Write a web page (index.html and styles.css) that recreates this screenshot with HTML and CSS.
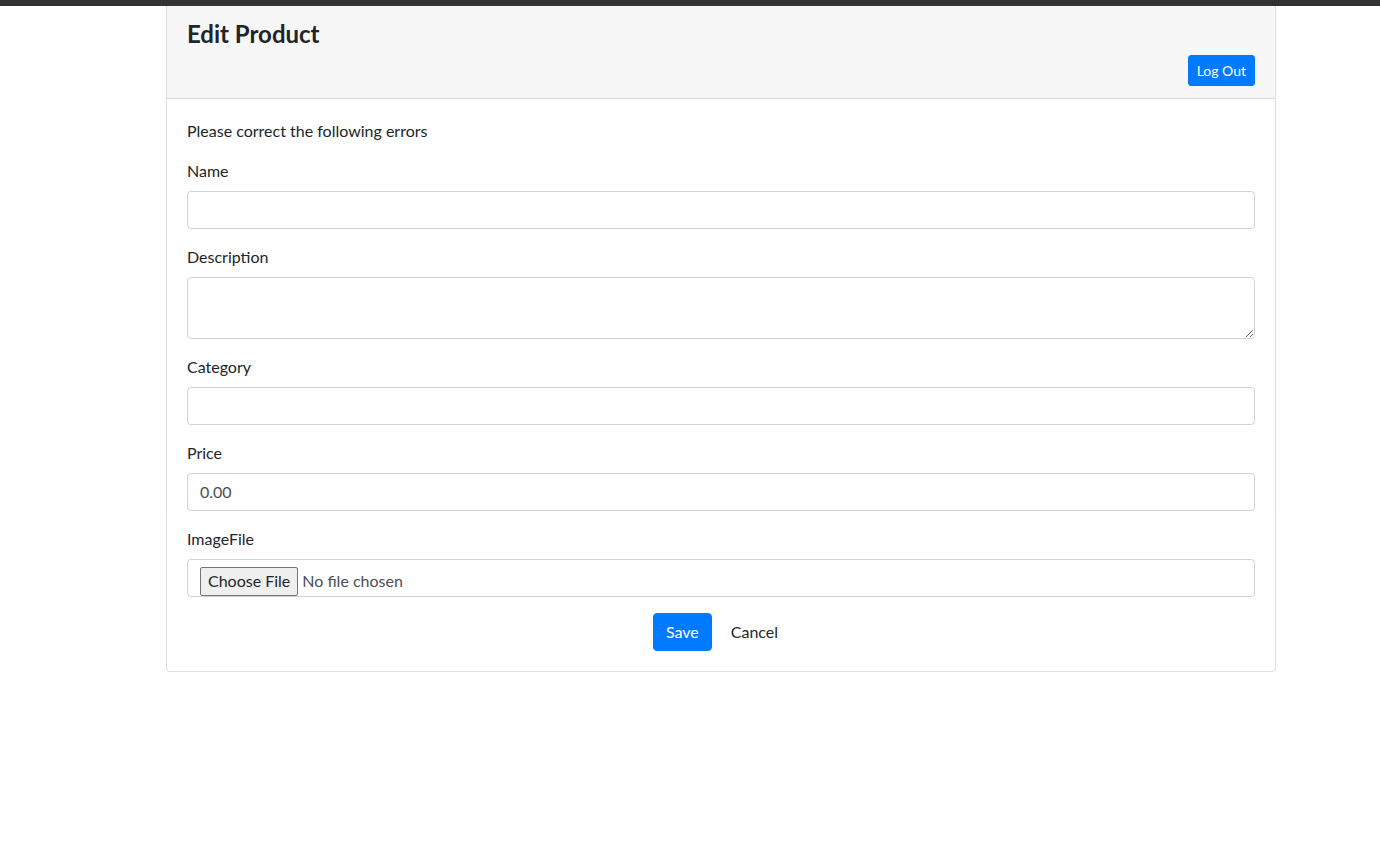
FILE: index.html
```html
<!DOCTYPE html>
<html lang="en">
<head>
<meta charset="utf-8">
<title>Edit Product</title>
<link rel="stylesheet" href="styles.css">
</head>
<body>
<div class="topbar"></div>
<div class="wrap">
  <div class="card">
    <div class="card-header">
      <h4 class="title">Edit Product</h4>
      <div class="header-actions">
        <button class="btn btn-primary btn-sm" type="button">Log Out</button>
      </div>
    </div>
    <div class="card-body">
      <p class="errors">Please correct the following errors</p>
      <div class="form-group">
        <label class="label">Name</label>
        <input class="form-control" type="text">
      </div>
      <div class="form-group">
        <label class="label">Description</label>
        <textarea class="form-control textarea" rows="2"></textarea>
      </div>
      <div class="form-group">
        <label class="label">Category</label>
        <input class="form-control" type="text">
      </div>
      <div class="form-group">
        <label class="label">Price</label>
        <input class="form-control" type="text" value="0.00">
      </div>
      <div class="form-group">
        <label class="label">ImageFile</label>
        <input class="form-control file" type="file">
      </div>
      <div class="actions">
        <button class="btn btn-primary" type="button">Save</button>
        <button class="btn btn-link" type="button">Cancel</button>
      </div>
    </div>
  </div>
</div>
</body>
</html>
```
FILE: styles.css
```css
* { box-sizing: border-box; }
html, body { margin: 0; padding: 0; }
body {
  font-family: "Lato", "Noto Sans", sans-serif;
  font-size: 16px;
  line-height: 1.5;
  color: #212529;
  background: #fff;
}
.topbar { height: 6px; background: #333333; }
.wrap { padding-left: 166px; width: 1276px; }
.card {
  border: 1px solid rgba(0,0,0,.125);
  border-top: none;
  border-radius: 0 0 4px 4px;
  background: #fff;
}
.card-header {
  background: #f7f7f7;
  border-bottom: 1px solid rgba(0,0,0,.125);
  padding: 14px 20px 12px;
}
.title {
  margin: 0 0 6px;
  font-size: 24px;
  font-weight: 700;
  line-height: 1.2;
}
.header-actions { display: flex; justify-content: flex-end; }
.card-body { padding: 20px; }
.errors { margin: 0 0 16px; }
.form-group { margin-bottom: 16px; }
.label { display: block; margin-bottom: 8px; }
.form-control {
  display: block;
  width: 100%;
  height: 38px;
  padding: 6px 12px;
  font-family: inherit;
  font-size: 16px;
  line-height: 1.5;
  color: #495057;
  background: #fff;
  border: 1px solid #ced4da;
  border-radius: 4px;
}
.textarea { height: 62px; resize: vertical; }
.file { padding: 7px 12px 0; font-size: 16px; line-height: 28px; }
.file::file-selector-button {
  font-family: inherit;
  font-size: 16px;
  line-height: 20px;
  color: #212529;
  padding: 3px 7px;
  margin-right: 4px;
  height: 29px;
  background: #efefef;
  border: 1px solid #767676;
  border-radius: 2px;
  vertical-align: top;
}
.btn {
  display: inline-block;
  font-family: inherit;
  font-size: 16px;
  line-height: 1.5;
  padding: 6px 12px;
  border: 1px solid transparent;
  border-radius: 4px;
  cursor: pointer;
}
.btn-primary { background: #007bff; border-color: #007bff; color: #fff; }
.btn-sm { font-size: 14px; padding: 4px 8px; line-height: 1.5; border-radius: 3px; }
.btn-link { background: transparent; color: #212529; }
.actions { display: flex; justify-content: center; gap: 6px; padding-left: 2px; }
```
